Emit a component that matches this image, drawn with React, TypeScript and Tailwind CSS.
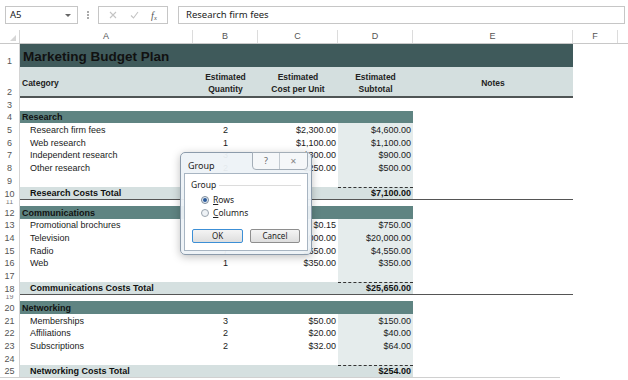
import React from "react";

type Item = { name: string; qty: string; cost: string; sub: string };

const sections: { title: string; start: number; items: Item[]; total: string; totalLabel: string }[] = [
  {
    title: "Research",
    start: 4,
    totalLabel: "Research Costs Total",
    total: "$7,100.00",
    items: [
      { name: "Research firm fees", qty: "2", cost: "$2,300.00", sub: "$4,600.00" },
      { name: "Web research", qty: "1", cost: "$1,100.00", sub: "$1,100.00" },
      { name: "Independent research", qty: "3", cost: "$300.00", sub: "$900.00" },
      { name: "Other research", qty: "2", cost: "$250.00", sub: "$500.00" },
    ],
  },
  {
    title: "Communications",
    start: 12,
    totalLabel: "Communications Costs Total",
    total: "$25,650.00",
    items: [
      { name: "Promotional brochures", qty: "5000", cost: "$0.15", sub: "$750.00" },
      { name: "Television", qty: "1", cost: "$20,000.00", sub: "$20,000.00" },
      { name: "Radio", qty: "7", cost: "$650.00", sub: "$4,550.00" },
      { name: "Web", qty: "1", cost: "$350.00", sub: "$350.00" },
    ],
  },
  {
    title: "Networking",
    start: 20,
    totalLabel: "Networking Costs Total",
    total: "$254.00",
    items: [
      { name: "Memberships", qty: "3", cost: "$50.00", sub: "$150.00" },
      { name: "Affiliations", qty: "2", cost: "$20.00", sub: "$40.00" },
      { name: "Subscriptions", qty: "2", cost: "$32.00", sub: "$64.00" },
    ],
  },
];

const RowHead = ({ n }: { n: number }) => (
  <div className="w-[20px] shrink-0 border-r border-[#d4d4d4] flex items-end justify-center text-[9px] font-normal leading-none pb-[1px] text-[#555]">
    {n}
  </div>
);

const SectionRows = ({ s, last }: { s: (typeof sections)[number]; last: boolean }) => {
  const n = s.start;
  return (
    <>
      <div className="flex h-[12.7px]">
        <RowHead n={n} />
        <div className="w-[393px] bg-[#5f8482] flex items-end pl-[2px] pb-[1px] text-[9px] leading-none font-bold text-[#111]">
          {s.title}
        </div>
      </div>
      {s.items.map((it, i) => (
        <div key={it.name} className="flex h-[12.7px] text-[9px] leading-none text-[#1a1a1a]">
          <RowHead n={n + 1 + i} />
          <div className="w-[173px] flex items-end pl-[10px] pb-[1px]">{it.name}</div>
          <div className="w-[65px] flex items-end justify-center pb-[1px]">{it.qty}</div>
          <div className="w-[80px] flex items-end justify-end pr-[2px] pb-[1px]">{it.cost}</div>
          <div className="w-[75px] bg-[#e5ecec] flex items-end justify-end pr-[2px] pb-[1px]">{it.sub}</div>
        </div>
      ))}
      <div className="flex h-[12.7px]">
        <RowHead n={n + 1 + s.items.length} />
        <div className="w-[318px]" />
        <div className="w-[75px] bg-[#e5ecec]" />
      </div>
      <div className="flex h-[12.7px] text-[9px] leading-none text-[#111]">
        <RowHead n={n + 2 + s.items.length} />
        <div className={`flex font-bold ${last ? "" : "border-b border-[#555]"}`}>
          <div className="w-[318px] bg-[#d5e0e0] flex items-end pl-[10px] pb-[1px]">{s.totalLabel}</div>
          <div className="w-[75px] bg-[#d5e0e0] border-t border-dashed border-[#333] flex items-end justify-end pr-[2px] pb-[1px]">
            {s.total}
          </div>
          <div className="w-[160px]" />
        </div>
      </div>
      {!last && (
        <div className="flex h-[6.5px] overflow-hidden">
          <div className="w-[20px] shrink-0 border-r border-[#d4d4d4] text-[7px] leading-[4px] text-center text-[#777]">
            {n + 3 + s.items.length}
          </div>
        </div>
      )}
    </>
  );
};

const GroupDialog = () => (
  <div
    className="absolute left-[180px] top-[152px] w-[132px] h-[103px] rounded-[5px] border border-[#8c9bab] bg-[#edf2f7]/95 shadow-[0_2px_8px_rgba(0,0,0,0.25)]"
    style={{ fontFamily: '"Noto Sans", "Open Sans", sans-serif' }}
  >
    <div className="absolute left-[7px] top-[6px] text-[9px] text-[#222]">Group</div>
    <div className="absolute right-[3px] top-[-1px] flex h-[18px] border border-[#a4aeb8] rounded-b-[4px] bg-[#f5f7f9]">
      <div className="w-[27px] flex items-center justify-center text-[9px] text-[#666] border-r border-[#c2c9d0]">
        ?
      </div>
      <div className="w-[27px] flex items-center justify-center text-[8px] text-[#888]">✕</div>
    </div>
    <div className="absolute left-[3px] top-[20px] right-[3px] bottom-[3px] bg-white border border-[#a8b5c2] px-[6px] pt-[7px]">
      <div className="flex items-center gap-[3px]">
        <span className="text-[8.5px] text-[#222] leading-none">Group</span>
        <div className="flex-1 border-t border-[#dcdcdc]" />
      </div>
      <div className="pl-[10px] pt-[6px] flex flex-col gap-[5px] text-[8.5px] leading-none text-[#222]">
        <div className="flex items-center gap-[4px]">
          <span className="w-[8px] h-[8px] rounded-full border border-[#7d8a99] bg-[#e6eef6] flex items-center justify-center">
            <span className="w-[4px] h-[4px] rounded-full bg-[#2c5a9a]" />
          </span>
          <span>
            <span className="underline">R</span>ows
          </span>
        </div>
        <div className="flex items-center gap-[4px]">
          <span className="w-[8px] h-[8px] rounded-full border border-[#9aa4ae] bg-[#eef2f6]" />
          <span>
            <span className="underline">C</span>olumns
          </span>
        </div>
      </div>
      <div className="flex gap-[7px] pl-[1px] pt-[11px]">
        <div className="w-[51px] h-[14px] border border-[#3c8fd6] rounded-[2px] bg-gradient-to-b from-[#f4f4f4] to-[#dedede] flex items-center justify-center text-[8px] leading-none text-[#222]">
          OK
        </div>
        <div className="w-[50px] h-[14px] border border-[#8e8e8e] rounded-[2px] bg-gradient-to-b from-[#f4f4f4] to-[#dedede] flex items-center justify-center text-[8px] leading-none text-[#222]">
          Cancel
        </div>
      </div>
    </div>
  </div>
);

const App = () => {
  const colHeads: [string, number][] = [
    ["A", 173],
    ["B", 65],
    ["C", 80],
    ["D", 75],
    ["E", 160],
    ["F", 45],
  ];
  return (
    <div
      className="relative w-[628px] h-[380px] overflow-hidden bg-white"
      style={{ fontFamily: '"Liberation Sans", Arial, sans-serif' }}
    >
      {/* formula bar */}
      <div
        className="h-[30px] flex items-center pl-[5px] pr-[3px] text-[9.5px] text-[#222]"
        style={{ fontFamily: '"Noto Sans", "Open Sans", sans-serif' }}
      >
        <div className="w-[73px] h-[18px] border border-[#c6c6c6] flex items-center justify-between pl-[4px] pr-[6px]">
          <span>A5</span>
          <span className="w-0 h-0 border-l-[3px] border-r-[3px] border-t-[3px] border-l-transparent border-r-transparent border-t-[#666]" />
        </div>
        <div className="w-[20px] flex flex-col items-center gap-[1.5px]">
          <span className="w-[1.5px] h-[1.5px] bg-[#aaa]" />
          <span className="w-[1.5px] h-[1.5px] bg-[#aaa]" />
          <span className="w-[1.5px] h-[1.5px] bg-[#aaa]" />
        </div>
        <div className="w-[70px] h-[18px] border border-[#c6c6c6] flex items-center justify-around px-[4px]">
          <svg width="8" height="8" viewBox="0 0 8 8">
            <path d="M1 1 L7 7 M7 1 L1 7" stroke="#c4c4c4" strokeWidth="1.1" />
          </svg>
          <svg width="9" height="8" viewBox="0 0 9 8">
            <path d="M1 4.5 L3.5 7 L8 1" stroke="#c4c4c4" strokeWidth="1.1" fill="none" />
          </svg>
          <span className="italic text-[#555] text-[10px]" style={{ fontFamily: '"Liberation Serif", serif' }}>
            f<sub className="text-[6.5px]">x</sub>
          </span>
        </div>
        <div className="w-[10px]" />
        <div className="flex-1 h-[18px] border border-[#c6c6c6] flex items-center pl-[7px]">Research firm fees</div>
      </div>

      {/* column headers */}
      <div className="flex h-[14px] border-b border-[#c8c8c8] text-[9px] text-[#555]">
        <div className="w-[20px] border-r border-[#d4d4d4] relative">
          <svg className="absolute right-[3px] bottom-[2px]" width="6" height="6" viewBox="0 0 6 6">
            <path d="M6 0 L6 6 L0 6 Z" fill="#d6d6d6" />
          </svg>
        </div>
        {colHeads.map(([c, w]) => (
          <div key={c} style={{ width: w }} className="border-r border-[#dcdcdc] flex items-center justify-center leading-none">
            {c}
          </div>
        ))}
        <div className="flex-1" />
      </div>

      {/* row 1 */}
      <div className="flex h-[23px]">
        <RowHead n={1} />
        <div className="w-[553px] bg-[#3f5a5b] flex items-end pl-[3px] pb-[4px] text-[13.5px] font-bold text-[#111] leading-none">
          Marketing Budget Plan
        </div>
      </div>
      {/* row 2 */}
      <div className="flex h-[31px]">
        <RowHead n={2} />
        <div className="flex w-[553px] bg-[#d4dfdf] border-b-2 border-[#4f5555] pt-[3px] text-[8.5px] font-bold leading-[12px] text-[#222]">
          <div className="w-[173px] flex items-center pl-[2px]">Category</div>
          <div className="w-[65px] flex items-center justify-center text-center">
            Estimated
            <br />
            Quantity
          </div>
          <div className="w-[80px] flex items-center justify-center text-center">
            Estimated
            <br />
            Cost per Unit
          </div>
          <div className="w-[75px] flex items-center justify-center text-center">
            Estimated
            <br />
            Subtotal
          </div>
          <div className="w-[160px] flex items-center justify-center">Notes</div>
        </div>
      </div>
      {/* row 3 */}
      <div className="flex h-[12.7px]">
        <RowHead n={3} />
      </div>

      {sections.map((s, i) => (
        <SectionRows key={s.title} s={s} last={i === sections.length - 1} />
      ))}

      <div className="border-t border-[#d0d0d0] w-[560px]" />

      <GroupDialog />
    </div>
  );
};

export default App;
